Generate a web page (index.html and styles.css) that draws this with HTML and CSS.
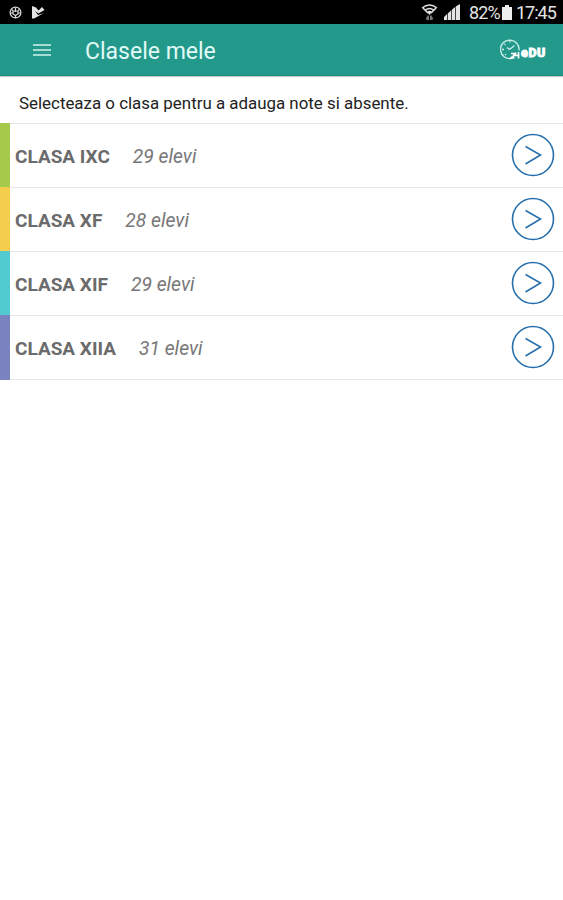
FILE: index.html
```html
<!DOCTYPE html>
<html lang="ro">
	<head>
		<meta charset="utf-8">
		<title>Clasele mele</title>
		<link rel="stylesheet" href="styles.css">
	</head>
	<body>
		<div id="status">
			<svg class="ball" width="13" height="13" viewBox="0 0 13 13">
				<circle cx="6.5" cy="6.5" r="5.4"/>
				<path d="M4 5h5v3l-2.500 1.500L4 8zM4 5L2.500 3M9 5l1.500-2M6.500 9.500V12M1 7h3M9 7h3M6.500 2v4"/>
			</svg>
			<svg class="play" width="14" height="14" viewBox="0 0 14 14">
				<path d="M1 1l4 1.500 2.500 3L11 2l2.500 3-6 3.500L4 6l3 4 6-2L3 13.500H1z"/>
			</svg>
			<div class="right">
				<svg class="wifi" width="17" height="19" viewBox="0 0 17 19">
					<path class="line" d="M1 5Q8.500-1 16 5M4 7.500q4.500-4 9 0"/>
					<path d="M6 9q2.500-2.500 5 0l-2.500 3z"/>
					<path class="line" d="M2 5l5 5M15 5l-5 5"/>
					<path class="dim" d="M5 15l2-3 1 1v4H5.500zM12 15l-2-3-1 1v4h2.500z"/>
				</svg>
				<svg class="signal" width="17" height="16" viewBox="0 0 17 16">
					<path d="M0 16v-3l3-3v6zM3.700 16V9.500l3.300-3V16zM7.700 16V6L11 3v13zM11.700 16V2.500L16 0v16z"/>
				</svg>
				<span class="battery">82%</span>
				<i class="cell"></i>
				<span class="time">17:45</span>
			</div>
		</div>
		<header>
			<div class="menu"><i></i><i></i><i></i></div>
			<h1>Clasele mele</h1>
			<div class="logo">
				<svg width="21" height="22" viewBox="0 0 21 22">
					<path d="M11.500 19.500A9.300 9.300 0 1 1 19 11.500M9.500 10.500l5-4M9.500 10.500L7 8.500M10 1.500v2M2 10.500h2M4.500 5l1 1M5 16l1-1"/>
					<path class="num" d="M11 14.500h3v2l-3 2.500h3.500M15.500 13.500v3h4M18.500 13v6.500"/>
				</svg>
				<b>eDU</b>
			</div>
		</header>
		<p class="info">Selecteaza o clasa pentru a adauga note si absente.</p>
		<ul id="list">
			<li class="green">
				<b>CLASA IXC</b><em>29 elevi</em>
				<svg width="44" height="44" viewBox="0 0 44 44"><circle cx="22" cy="22" r="20.500"/><path d="M14.500 13.500L29.500 22l-15 9"/></svg>
			</li>
			<li class="yellow">
				<b>CLASA XF</b><em>28 elevi</em>
				<svg width="44" height="44" viewBox="0 0 44 44"><circle cx="22" cy="22" r="20.500"/><path d="M14.500 13.500L29.500 22l-15 9"/></svg>
			</li>
			<li class="cyan">
				<b>CLASA XIF</b><em>29 elevi</em>
				<svg width="44" height="44" viewBox="0 0 44 44"><circle cx="22" cy="22" r="20.500"/><path d="M14.500 13.500L29.500 22l-15 9"/></svg>
			</li>
			<li class="purple">
				<b>CLASA XIIA</b><em>31 elevi</em>
				<svg width="44" height="44" viewBox="0 0 44 44"><circle cx="22" cy="22" r="20.500"/><path d="M14.500 13.500L29.500 22l-15 9"/></svg>
			</li>
		</ul>
	</body>
</html>
```
FILE: styles.css
```css
*{margin: 0; padding: 0; box-sizing: border-box;}
body{background: #fff; font-family: Roboto, "Liberation Sans", sans-serif;}
li{list-style: none;}
svg{display: block; flex: none;}

#status{display: flex; align-items: center; height: 24px; padding: 0 7px 0 9px; background: #000; color: #e4e4e4;}
#status svg{fill: #e4e4e4;}
#status .ball{fill: none; stroke: #ddd; stroke-width: 1.2;}
#status .play{margin-left: 9px;}
#status .right{display: flex; align-items: center; margin-left: auto; font-size: 18px; line-height: 24px;}
#status .wifi .line{fill: none; stroke: #ddd; stroke-width: 1.6;}
#status .wifi .dim{fill: #777;}
#status .signal{margin-left: 6px;}
#status .battery{margin-left: 8px; width: 33px; letter-spacing: -0.9px; padding-top: 2px;}
#status .cell{width: 10px; height: 13px; margin-top: 2px; background: #eee; position: relative;}
#status .cell:before{content: ""; position: absolute; left: 3px; top: -2px; width: 4px; height: 2px; background: #eee;}
#status .time{margin-left: 4px; width: 40px; letter-spacing: -1px; padding-top: 2px;}

header{display: flex; align-items: center; height: 52px; padding: 0 16px 0 33px; background: #23998b; border-bottom: 1px solid #1f8b7e; box-shadow: 0 1px 1px #ccc;}
.menu{width: 18px; padding-top: 1px;}
.menu i{display: block; height: 2px; margin-bottom: 3px; background: #a5dcd4;}
.menu i:last-child{margin-bottom: 0;}
h1{margin-left: 34px; padding-top: 3px; font-size: 23px; font-weight: 400; color: #e2faf6;}
.logo{display: flex; align-items: center; margin-left: auto; color: #fff;}
.logo svg{fill: none; stroke: #c9eee8; stroke-width: 1.3;}
.logo .num{stroke: #fff; stroke-width: 1.7;}
.logo b{width: 26px; font-size: 12.5px; line-height: 12px; font-weight: 900; padding-top: 6px; letter-spacing: 0.6px; -webkit-text-stroke: 0.8px #fff;}

.info{height: 47px; padding: 0 19px; font-size: 16.9px; line-height: 54px; color: #222; white-space: nowrap;}

#list li{display: flex; align-items: center; height: 64px; padding: 0 8px 0 5px; border-left: 10px solid; box-shadow: inset 0 1px #e6e6e6;}
#list li:last-child{height: 65px; padding-bottom: 1px; box-shadow: inset 0 1px #e6e6e6, inset 0 -1px #e6e6e6;}
#list b{font-size: 19px; font-weight: 700; color: #6b6b6b; padding-top: 2px;}
#list em{margin-left: 23px; font-size: 19.3px; color: #777; padding-top: 2px;}
#list svg{margin-left: auto; fill: none; stroke: #2870ab; stroke-width: 1.6;}
#list .green{border-left-color: #a5c94b;}
#list .yellow{border-left-color: #f5cd4c;}
#list .cyan{border-left-color: #51cad0;}
#list .purple{border-left-color: #7b82c0;}
```
